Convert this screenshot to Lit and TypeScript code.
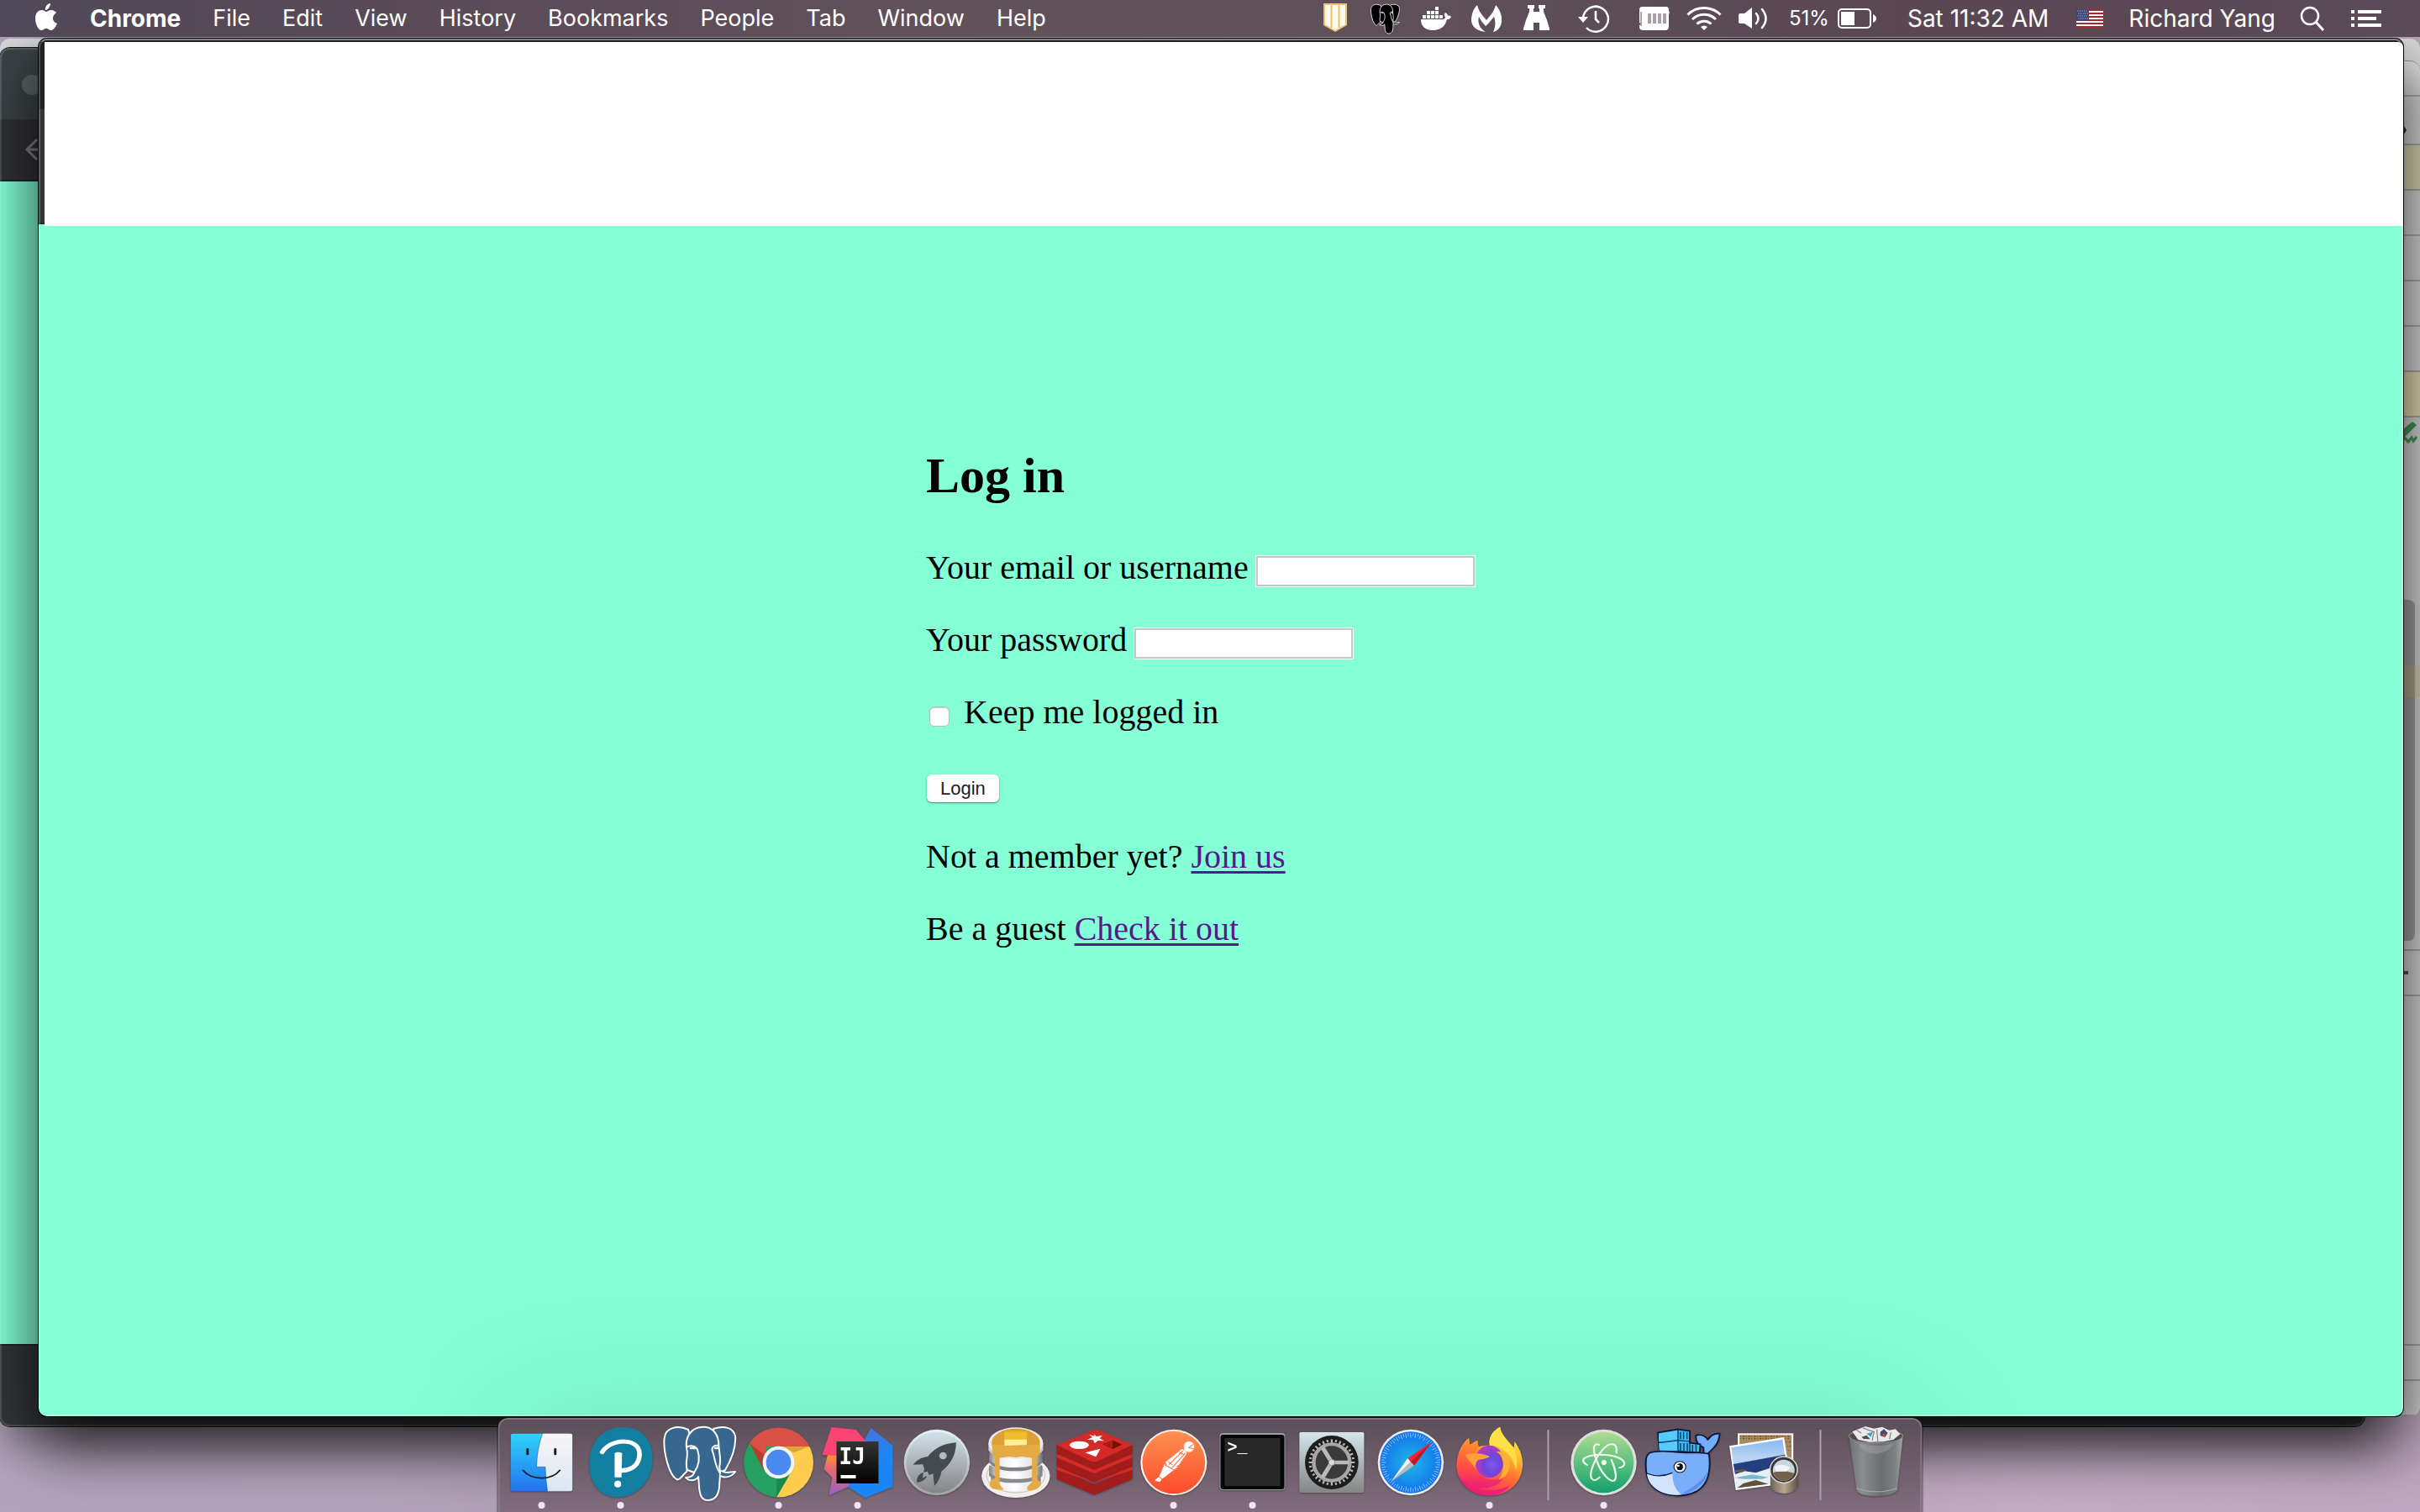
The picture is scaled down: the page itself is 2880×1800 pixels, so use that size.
import { LitElement, html, svg, css, type TemplateResult } from "lit";
import { customElement } from "lit/decorators.js";

/* ---------- shared drawings ---------- */

const elephant = (fill: string, line: string, w: number) => svg`
  <g fill=${fill} stroke=${line} stroke-width=${w} stroke-linejoin="round" stroke-linecap="round">
    <path d="M60 5C72 1 84 3 86 14C87 28 81 42 74 54L66 58L58 20Z"/>
    <path d="M30 6C18 0 3 3 1.500 16C0 32 7 60 16 65C20 67 22 61 28 56L34 20Z"/>
    <path d="M29 54C25 46 31 38 28 28C26 14 34 4 45 3C56 1 64 8 66 20C66 34 70 40 67 50C69 58 67 66 67 74C66 84 62 90 53 90C46 90 44 84 43 76L42 62C38 68 30 67 27 63C32 63 36 61 37 57Z"/>
    <path d="M69 55C75 59 80 56 86 56C82 62 74 64 68 61" />
    <path d="M28 27C32 24 39 25 41 30C45 42 42 50 37 57" fill="none"/>
    <path d="M66 25C60 24 57 28 59 32C62 40 61 48 68 58" fill="none"/>
    <path d="M33 28h5M62 28h4" stroke-width=${w * 1.3}/>
  </g>`;

const ticks = (n: number, cx: number, cy: number, r1: number, r2: number, ratio: number) => {
  let d = "";
  for (let i = 0; i < n; i++) {
    const a = (i / n) * Math.PI * 2;
    const inner = i % 2 ? r1 + (r2 - r1) * 0.35 : r1;
    d += `M${cx + Math.cos(a) * inner} ${cy + Math.sin(a) * inner * ratio}L${cx + Math.cos(a) * r2} ${cy + Math.sin(a) * r2 * ratio}`;
  }
  return d;
};

/* ---------- menu bar glyphs ---------- */

interface Glyph { label: string; cell: number; w: number; art: TemplateResult }

const glyphs: Glyph[] = [
  { label: "Shield", cell: 60, w: 28, art: svg`
    <path d="M0 4H28V30L14 38L0 30Z" fill="#efc172"/>
    <path d="M2 6H26V29L14 36L2 29Z" fill="#fffaf0"/>
    <path d="M9.500 6V33M18.500 6V33" stroke="#efbd68" stroke-width="2"/>` },
  { label: "PostgreSQL", cell: 60, w: 36, art: svg`<g transform="translate(0 4) scale(.4)">${elephant("#000", "#f1edf0", 2.2)}</g>` },
  { label: "Docker", cell: 60, w: 36, art: svg`
    <path d="M0 23H26C28 23 29 22 29 20C27 18 28 16 29 15C31 16 32 17 32 19C34 18 35 19 36 20C35 23 32 23 31 23C29 31 24 36 14 36C5 36 0 31 0 23Z" fill="#fff"/>
    <g fill="#fff"><path d="M2 18h4v4h-4zM7 18h4v4h-4zM12 18h4v4h-4zM17 18h4v4h-4zM22 18h4v4h-4zM7 13h4v4h-4zM12 13h4v4h-4zM17 13h4v4h-4zM17 8h4v4h-4z"/></g>` },
  { label: "Malware scanner", cell: 60, w: 36, art: svg`
    <path d="M7 6C9 14 13 18 18 24C23 18 27 14 29 6C34 11 37 19 36 26C35 33 31 37 26 38C29 32 29 25 27 20C24 23 21 28 17 31C14 28 11 24 9 20C7 27 10 34 17 38C8 37 1 33 0 25C0 18 2 11 7 6Z" fill="#fff"/>` },
  { label: "Binoculars", cell: 60, w: 32, art: svg`
    <path d="M5 6h8v4h-1v4h7v-4h-1V6h8v4h-2v4l4 10l3 10v2H19V27h-7v9H0v-2l3-10l4-10v-4H5z" fill="#fff"/>` },
  { label: "Time Machine", cell: 76, w: 38, art: svg`
    <path d="M6 21A15 15 0 1 1 10 33" fill="none" stroke="#fff" stroke-width="2.500"/>
    <path d="M0 20H12L6 27Z" fill="#fff"/><path d="M21 13V23L25 27" fill="none" stroke="#fff" stroke-width="2.500"/>` },
  { label: "Memory", cell: 68, w: 36, art: svg`
    <path d="M4 8H32C35 8 35 11 35 13C36 14 36 16 35 17V31C35 35 33 36 31 36H5C2 36 0 35 0 32V30C2 29 2 28 0 27V12C0 9 1 8 4 8Z" fill="#fff"/>
    <path d="M2 14V31" stroke="#5d4d57" stroke-width="1"/>
    <path d="M12 16V28M18 16V28M24 16V28M30 16V28" stroke="#a99fa6" stroke-width="4"/>` },
  { label: "Wi-Fi", cell: 50, w: 42, art: svg`
    <g fill="none" stroke="#fff" stroke-width="3"><path d="M1.500 17.500A28 28 0 0 1 40.500 17.500"/><path d="M7 23A20 20 0 0 1 35 23"/><path d="M12.500 28.500A12.500 12.500 0 0 1 29.500 28.500"/></g>
    <path d="M17 32A6 6 0 0 1 25 32L21 36Z" fill="#fff"/>` },
  { label: "Volume", cell: 66, w: 34, art: svg`
    <path d="M0 18Q0 16 2 16H7L16 9V34L7 28H2Q0 28 0 26Z" fill="#fff"/>
    <g fill="none" stroke="#fff" stroke-width="2.500" stroke-linecap="round"><path d="M21 16Q26 22 21 28"/><path d="M28 11Q37 22 28 33"/></g>` },
];

const battery: Glyph = { label: "Battery", cell: 56, w: 46, art: svg`
  <rect x="1" y="11" width="38" height="22" rx="4" fill="none" stroke="#fff" stroke-width="2"/>
  <rect x="4" y="14" width="16" height="16" fill="#fff"/><path d="M42 17Q46 19 46 22Q46 25 42 27Z" fill="#fff"/>` };
const flag: Glyph = { label: "Input source: U.S.", cell: 64, w: 32, art: svg`
  <rect y="11" width="32" height="22" fill="#fff"/>
  <path d="M0 12H32M0 16H32M0 20H32M0 24H32M0 28H32M0 32H32" stroke="#ad2730" stroke-width="2"/>
  <rect y="11" width="15" height="14" fill="#3f4577"/>
  <path d="M1.500 13H14M2.500 16H14M1.500 19H14M2.500 22H14" stroke="#c9cbe0" stroke-width="1" stroke-dasharray="1 1.500"/>` };
const search: Glyph = { label: "Spotlight", cell: 60, w: 30, art: svg`
  <circle cx="12" cy="19" r="10" fill="none" stroke="#fff" stroke-width="2.500"/><path d="M19 26L28 36" stroke="#fff" stroke-width="3"/>` };
const list: Glyph = { label: "Notification Center", cell: 68, w: 36, art: svg`
  <path d="M0 12h4v4h-4zM0 20h4v4h-4zM0 28h4v4h-4zM8 12h28v4h-28zM8 20h22v4h-22zM8 28h28v4h-28z" fill="#fff"/>` };

/* ---------- dock icons; vb is the view box of each drawing ---------- */

interface App { name: string; vb: string; running?: boolean; art: TemplateResult }
const box = (x: number) => `${x} 66 254 282`;

const apps: App[] = [
  { name: "Finder", vb: box(22), running: true, art: svg`
    <defs><linearGradient id="fb" x2="0" y2="1"><stop stop-color="#2fd3fb"/><stop offset="1" stop-color="#2273ee"/></linearGradient>
    <linearGradient id="fw" x2="0" y2="1"><stop stop-color="#f7f6f6"/><stop offset="1" stop-color="#dbe6f3"/></linearGradient></defs>
    <rect x="50" y="110" width="198" height="206" rx="6" fill="url(#fb)"/>
    <path d="M152 110H242Q248 110 248 116V310Q248 316 242 316H168Q162 270 161 229H133Q134 165 152 110Z" fill="url(#fw)"/>
    <path d="M152 110Q134 165 133 229H161Q162 270 168 316" fill="none" stroke="#1c4f86" stroke-width="1.500"/>
    <path d="M104 166V183M193 166V183" stroke="#141a22" stroke-width="8" stroke-linecap="round"/>
    <path d="M89 241Q110 269 150 269Q188 269 208 241" fill="none" stroke="#141a22" stroke-width="5" stroke-linecap="round"/>` },
  { name: "Pearson", vb: box(276), running: true, art: svg`
    <path d="M408 87C470 87 507 130 506 205C504 280 455 337 392 337C335 337 302 285 302 215C304 135 350 87 408 87Z" fill="#127fa1"/>
    <path d="M344 176C362 145 400 134 428 140C455 146 468 166 463 195C458 228 430 246 396 241" fill="none" stroke="#fff" stroke-width="15" stroke-linecap="round"/>
    <path d="M384 180Q396 172 408 180L406 266H384Z" fill="#fff"/><ellipse cx="394" cy="290" rx="11" ry="12" fill="#fff"/>` },
  { name: "pgAdmin", vb: "-3.600 -4 94 94", art: svg`${elephant("#37678f", "#fff", 2)}` },
  { name: "Chrome", vb: box(784), running: true, art: svg`
    <defs><clipPath id="cc"><ellipse cx="911" cy="213" rx="112" ry="124"/></clipPath></defs>
    <g clip-path="url(#cc)"><rect x="798" y="88" width="226" height="252" fill="#25a060"/>
    <path d="M911 156H1030V345H900L952 245Z" fill="#fecd4f"/>
    <path d="M790 160L818 145L865 240L870 156H1030V80H790Z" fill="#da5046"/>
    <path d="M818 145L866 245L870 190Z" fill="#b73c32"/><path d="M925 156H1010L960 178Z" fill="#dba638"/>
    <path d="M905 337L946 258L905 268Z" fill="#198a4d"/></g>
    <ellipse cx="911" cy="213" rx="51" ry="58" fill="#f3f4f3"/><ellipse cx="911" cy="213" rx="40" ry="46" fill="#4a8af0"/>` },
  { name: "IntelliJ IDEA", vb: "0 0 94 94", running: true, art: svg`
    <defs><linearGradient id="jb" x1="0" y1="0" x2=".6" y2="1"><stop stop-color="#5f6bd0"/><stop offset=".7" stop-color="#1a86f6"/></linearGradient>
    <linearGradient id="jk" x2="0" y2="1"><stop stop-color="#343434"/><stop offset="1"/></linearGradient>
    <linearGradient id="jp" x2="0" y2="1"><stop stop-color="#ff9a2c"/><stop offset=".35" stop-color="#e8696c"/><stop offset="1" stop-color="#9563c4"/></linearGradient></defs>
    <path d="M12 38L7 57L17 67L13 88L50 72V40Z" fill="url(#jp)"/>
    <path d="M63 8L89 29V78L56 91L36 78L54 24Z" fill="url(#jb)"/>
    <path d="M16 7L45 10L58 25L40 42L5 40Z" fill="#fc4473"/>
    <rect x="22" y="24" width="50" height="50" fill="url(#jk)"/>
    <text x="25" y="51" font-family="'DejaVu Sans Mono', monospace" font-weight="700" font-size="26" fill="#fff">IJ</text>
    <rect x="27" y="64" width="18" height="4" fill="#fff"/>` },
  { name: "Launchpad", vb: box(1292), art: svg`
    <defs><linearGradient id="lp" x2="0" y2="1"><stop stop-color="#d2e2ea"/><stop offset="1" stop-color="#858585"/></linearGradient>
    <linearGradient id="lr" x2="0" y2="1"><stop stop-color="#e5f4fa"/><stop offset="1" stop-color="#a2a2a2"/></linearGradient></defs>
    <ellipse cx="1420" cy="213" rx="106" ry="118" fill="url(#lr)"/><ellipse cx="1420" cy="213" rx="98" ry="109" fill="url(#lp)"/>
    <path d="M1482 142C1440 145 1410 165 1391 192C1370 195 1355 205 1344 221L1375 220L1380 236L1377 248L1390 245L1395 258L1408 253L1412 297C1425 282 1432 265 1435 245C1465 220 1482 185 1482 142Z" fill="#454a4e"/>
    <ellipse cx="1440" cy="189" rx="12" ry="13" fill="#b5bcc0"/>
    <path d="M1377 249C1360 255 1355 268 1356 284C1372 282 1385 275 1388 260L1374 269Z" fill="#454a4e"/>` },
  { name: "Sequel Pro", vb: box(32), art: svg`
    <defs><linearGradient id="sp"><stop stop-color="#8c8c8c"/><stop offset=".2" stop-color="#f1f1f1"/><stop offset=".5" stop-color="#fff"/><stop offset=".8" stop-color="#e4e4e4"/><stop offset="1" stop-color="#777"/></linearGradient></defs>
    <ellipse cx="160" cy="262" rx="110" ry="77" fill="#f1f0ef"/><ellipse cx="160" cy="259" rx="94" ry="62" fill="none" stroke="#b9aa98" stroke-width="2"/>
    <path d="M80 250H240V285Q225 315 160 315T80 285Z" fill="url(#sp)"/>
    <path d="M74 225Q160 285 246 225V260Q225 285 160 286T74 260Z" fill="#888b8d"/><path d="M76 222Q160 275 244 222V248Q225 272 160 272T76 248Z" fill="url(#sp)"/>
    <path d="M74 180Q160 240 246 180V212Q225 243 160 244T74 212Z" fill="#808385"/><path d="M76 175Q160 225 244 175V203Q225 230 160 231T76 203Z" fill="url(#sp)"/>
    <path d="M72 144V170Q90 198 160 198T248 170V144Z" fill="#c8c8c8"/><ellipse cx="160" cy="144" rx="88" ry="56" fill="#eceae8"/>
    <ellipse cx="160" cy="143" rx="78" ry="51" fill="#dca035"/>
    <path d="M84 150V180Q88 190 93 194V270Q72 278 76 296Q84 314 122 310L108 292V197Q160 186 212 197V284Q192 300 198 312Q225 318 240 295Q245 282 229 276V194L238 180V150Z" fill="#e4ab45"/>
    <path d="M122 107Q124 103 130 103H192Q197 105 196 115L195 150L124 153Z" fill="#eebd2d"/><path d="M124 131H196L195 150L124 153Z" fill="#fff0a0"/>` },
  { name: "Redis", vb: box(286), art: svg`
    <path d="M292 236V272L412 329L535 272V236L412 290Z" fill="#a11d1c"/><path d="M292 232L412 180L535 232V240L412 284L292 240Z" fill="#d52b28"/>
    <path d="M292 196V228L412 284L535 228V196L412 250Z" fill="#a11d1c"/><path d="M292 188L412 140L535 188V196L412 252L292 196Z" fill="#d52b28"/>
    <path d="M292 150V182L412 240L535 182V150L412 206Z" fill="#a11d1c"/><path d="M292 150L405 100Q418 93 432 100L535 150L425 208Q412 214 400 208Z" fill="#d52b28"/>
    <ellipse cx="364" cy="151" rx="31" ry="14" fill="#fff"/><path d="M383 178L432 164L418 193Z" fill="#fff"/>
    <path d="M411 110L419 120L438 117L430 127L444 136L424 135L414 145L409 133L389 131L406 124L397 114L414 119Z" fill="#fff"/>
    <path d="M440 148L472 134L502 149L472 165Z" fill="#7a0c00"/><path d="M440 148L472 134V164Z" fill="#a82016"/>` },
  { name: "Postman", vb: box(540), running: true, art: svg`
    <defs><linearGradient id="pm" x2="0" y2="1"><stop stop-color="#fd9150"/><stop offset="1" stop-color="#fd4b2d"/></linearGradient></defs>
    <ellipse cx="668" cy="213" rx="107" ry="118" fill="#f7f2ee"/><ellipse cx="668" cy="213" rx="101" ry="112" fill="url(#pm)"/>
    <ellipse cx="717" cy="157" rx="17" ry="19" fill="#fff"/><path d="M731 148L716 160L734 165" fill="none" stroke="#fd7a47" stroke-width="3"/>
    <path d="M693 166Q707 168 710 181L684 222L655 240L641 212Z" fill="#fff"/><path d="M638 220L662 228L682 228L630 272L623 282L606 278L622 262Z" fill="#fff"/>
    <path d="M697 172L652 221M705 180L662 232M684 175L703 186M650 209L664 222M640 222L672 242M620 263L632 274" stroke="#fd6d3f" stroke-width="3"/>` },
  { name: "Terminal", vb: "0 0 94 94", running: true, art: svg`
    <rect x="8" y="14" width="78" height="68" rx="4" fill="#99a1a8"/><rect x="9" y="16" width="76" height="65" rx="3" fill="#060606"/><rect x="14" y="20" width="66" height="57" fill="#282828"/>
    <text x="17" y="37" font-family="'Liberation Mono', monospace" font-weight="700" font-size="20" fill="#fff">&gt;_</text>` },
  { name: "System Preferences", vb: box(1048), art: svg`
    <defs><linearGradient id="pr" x2="0" y2="1"><stop stop-color="#d4e6ee"/><stop offset="1" stop-color="#858585"/></linearGradient></defs>
    <rect x="1072" y="105" width="208" height="216" rx="5" fill="url(#pr)"/>
    <ellipse cx="1176" cy="213" rx="86" ry="96" fill="#1d1d1d"/><path d=${ticks(32, 1176, 213, 62, 74, 1.11)} stroke="#b6b6b6" stroke-width="6"/>
    <ellipse cx="1176" cy="213" rx="58" ry="65" fill="#3a3a3a" stroke="#a7a7a7" stroke-width="12"/>
    <path d="M1176 213H1232M1176 213L1147 160M1176 213L1147 266" stroke="#b9b9b9" stroke-width="14"/>
    <ellipse cx="1176" cy="213" rx="10" ry="11" fill="#ddd" stroke="#777" stroke-width="2"/>` },
  { name: "Safari", vb: box(1302), art: svg`
    <defs><radialGradient id="sf"><stop stop-color="#21b9e2"/><stop offset="1" stop-color="#1273f0"/></radialGradient></defs>
    <ellipse cx="1430" cy="213" rx="106" ry="118" fill="#eeeeef"/><ellipse cx="1430" cy="213" rx="99" ry="110" fill="url(#sf)"/>
    <path d=${ticks(72, 1430, 213, 80, 95, 1.11)} stroke="#c5e6fb" stroke-width="2"/>
    <path d="M1497 140L1420 198L1441 224Z" fill="#ef2734"/><path d="M1497 140L1430 211L1441 224Z" fill="#c51626"/>
    <path d="M1366 283L1420 198L1430 211Z" fill="#f6f4f2"/><path d="M1366 283L1430 211L1441 224Z" fill="#b9b9bb"/>` },
  { name: "Firefox", vb: box(16), running: true, art: svg`
    <defs><linearGradient id="ff" x1=".8" y1="0" x2=".3" y2="1"><stop stop-color="#fff24b"/><stop offset=".3" stop-color="#ffc02f"/><stop offset=".6" stop-color="#ff6b35"/><stop offset="1" stop-color="#f0256c"/></linearGradient>
    <radialGradient id="fp" cx=".6" cy=".6"><stop stop-color="#7a58f0"/><stop offset=".6" stop-color="#7045d6"/><stop offset="1" stop-color="#a73cc8"/></radialGradient>
    <linearGradient id="fo" x2="0" y2="1"><stop stop-color="#ff9a2a"/><stop offset=".6" stop-color="#ff4a44"/><stop offset="1" stop-color="#ec1f7a"/></linearGradient></defs>
    <path d="M144 152C138 120 158 98 177 86C180 112 200 132 222 160L224 138C240 162 251 190 250 225C246 290 200 331 144 331C85 331 38 285 38 225C38 180 55 145 77 126L80 150L104 134L108 156C120 154 130 152 144 152Z" fill="url(#ff)"/>
    <path d="M38 225C38 180 55 145 77 126L80 150L104 134L108 156C92 180 88 215 100 240C120 275 160 285 190 262C178 305 110 320 60 288C45 270 38 248 38 225Z" fill="url(#fo)"/>
    <path d="M42 256C70 310 150 330 210 295C190 322 165 331 144 331C95 331 55 305 42 256Z" fill="#ef1f73"/>
    <ellipse cx="143" cy="210" rx="46" ry="58" fill="url(#fp)"/>
    <path d="M66 186C90 176 115 180 144 191C138 200 118 200 108 204C98 210 100 222 96 236C92 218 75 208 66 186Z" fill="#ffa03a"/>
    <path d="M165 174C190 172 210 190 209 220C206 255 190 270 172 276C190 250 192 215 180 190C175 182 170 178 165 174Z" fill="#ffae35"/>
    <path d="M144 152C138 120 158 98 177 86C180 112 205 140 222 165C232 190 235 215 228 240C222 190 190 165 160 153Z" fill="#ffe147"/>` },
];

const tools: App[] = [
  { name: "Atom", vb: box(384), running: true, art: svg`
    <defs><linearGradient id="at" x2="0" y2="1"><stop stop-color="#b0dc91"/><stop offset=".5" stop-color="#5fc07f"/><stop offset="1" stop-color="#12a06d"/></linearGradient></defs>
    <ellipse cx="511" cy="213" rx="106" ry="118" fill="#dedede"/><ellipse cx="511" cy="213" rx="97" ry="109" fill="url(#at)"/>
    <ellipse cx="512" cy="213" rx="8" ry="9" fill="#f5f9f3"/>
    <g fill="none" stroke="#f1f8ee" stroke-width="6" stroke-linecap="round"><path d="M552 178C556 140 530 140 510 165C485 195 462 250 472 270C480 282 490 274 498 266"/>
    <path d="M496 150C478 140 474 165 488 205C502 250 530 284 545 278C555 268 548 235 536 204"/><path d="M458 222C430 205 450 188 495 185C550 184 590 205 574 226Q570 231 562 232"/></g>` },
  { name: "Docker", vb: box(638), art: svg`
    <g stroke="#0b1638" stroke-width="5" stroke-linejoin="round"><path d="M846 182C860 165 882 150 884 110C868 108 855 116 846 132C838 118 825 112 808 116C806 140 815 150 832 160L833 182Z" fill="#74adfb"/>
    <path d="M686 106L750 95L788 101V143L822 148L820 178L690 170L688 144Z" fill="#38b9f0"/>
    <path d="M660 178C700 165 740 180 790 178C815 180 835 175 850 184C856 240 850 290 810 316C770 340 715 335 680 310C650 285 645 250 647 210Q646 188 660 178Z" fill="#79affa"/></g>
    <path d="M688 110L748 99V133L688 139Z" fill="#55cbfb"/><path d="M688 144L748 137V172L690 170Z" fill="#55cbfb"/>
    <path d="M750 95V176M686 143L750 134L788 138M788 140V178M758 104V130M768 104V130M779 105V130M758 144V172M769 144V172M780 145V172M797 150V174M808 151V174" fill="none" stroke="#0b2a58" stroke-width="3.500"/>
    <path d="M847 240C840 290 800 320 760 328C800 300 835 275 847 240Z" fill="#5a8ee8"/>
    <path d="M650 252Q690 268 732 250Q730 300 760 328C700 335 653 300 650 252Z" fill="#d3e2fd"/>
    <path d="M650 252Q690 270 732 250" fill="none" stroke="#0b1638" stroke-width="4"/>
    <ellipse cx="756" cy="229" rx="19" ry="20" fill="#fff" stroke="#0b1638" stroke-width="3"/><ellipse cx="756" cy="229" rx="10" ry="12" fill="#070b18"/><ellipse cx="751" cy="225" rx="4" ry="4" fill="#fff"/>` },
  { name: "Preview", vb: box(892), art: svg`
    <defs><linearGradient id="sky" x2="0" y2="1"><stop stop-color="#86b8f2"/><stop offset=".7" stop-color="#b9d3f2"/></linearGradient>
    <linearGradient id="lens"><stop stop-color="#6f6456"/><stop offset=".5" stop-color="#b7a98f"/><stop offset="1" stop-color="#5c5145"/></linearGradient></defs>
    <rect x="942" y="109" width="179" height="130" fill="#fbfaf7"/><rect x="948" y="115" width="167" height="110" fill="#a98a5c"/>
    <path d="M950 120H1112M950 128H1112M1098 140H1112M1100 155H1114M1104 170H1114" stroke="#6e5331" stroke-width="4" stroke-dasharray="3 5 6 4"/>
    <path d="M915 154L1091 123L1114 286L936 312Z" fill="#fff"/><path d="M922 160L1086 131L1094 190L928 224Z" fill="url(#sky)"/>
    <path d="M928 219L1094 185L1107 278L941 304Z" fill="#233f80"/><path d="M932 256L965 244L1000 250L1050 232L1100 240L1107 278L941 304Z" fill="#e6f0f7"/>
    <path d="M934 268L990 256L1040 266L1020 272L960 272Z" fill="#7eb7cc"/><path d="M933 240L970 238L960 247L934 250Z" fill="#6b5a4c"/><path d="M941 304L960 288L1000 276L1040 290Z" fill="#5f5036"/>
    <path d="M1047 240V300Q1058 323 1092 324Q1125 322 1136 300V240Z" fill="url(#lens)"/><ellipse cx="1090" cy="239" rx="44" ry="47" fill="#3a3834" stroke="#dddcd9" stroke-width="4"/>
    <ellipse cx="1090" cy="241" rx="35" ry="38" fill="#c6d7e2"/><path d="M1056 250Q1080 235 1124 252Q1115 278 1090 279Q1065 278 1056 250Z" fill="#77614a"/><path d="M1060 228Q1085 212 1112 232L1098 245L1066 246Z" fill="#eef4f8"/>` },
];

const trash: App = { name: "Trash", vb: box(1265), art: svg`
  <defs><linearGradient id="tr"><stop stop-color="#6d7071"/><stop offset=".25" stop-color="#8b8e8e"/><stop offset=".6" stop-color="#6b6d6e"/><stop offset=".85" stop-color="#7e8081"/><stop offset="1" stop-color="#a1a4a5"/></linearGradient></defs>
  <path d="M1305 118Q1392 155 1479 118L1460 312Q1445 333 1392 333T1330 312Z" fill="url(#tr)"/>
  <path d="M1305 118Q1310 100 1392 100T1479 118Q1470 143 1392 143T1305 118Z" fill="#4b4d4e" stroke="#8d9091" stroke-width="3"/>
  <path d="M1316 103L1358 84L1386 92L1412 86L1435 98L1455 94L1470 112L1448 132L1415 139L1370 140L1335 132Z" fill="#e9e9e7"/>
  <path d="M1362 110L1382 104L1376 122Z" fill="#35a7c4"/><path d="M1346 122L1362 116L1374 130L1352 129Z" fill="#5a4c4a"/><path d="M1406 104L1418 94L1430 108L1422 122L1406 118Z" fill="#3a4d74"/><path d="M1410 112L1425 110L1420 124Z" fill="#c2452b"/>
  <path d="M1395 95L1398 138M1330 98L1345 108M1440 105L1436 130M1350 90L1386 104L1380 134" stroke="#77797a" stroke-width="3" fill="none"/>
  <path d="M1336 146Q1392 160 1450 146Q1430 178 1392 182Q1350 180 1336 146Z" fill="#a5a8a8" opacity=".45"/>
  <path d="M1330 305Q1392 330 1461 305" fill="none" stroke="#a3a6a7" stroke-width="3"/>` };

/* ---------- elements ---------- */

@customElement("menu-bar")
class MenuBar extends LitElement {
  static styles = css`
    :host { display: flex; justify-content: space-between; height: 44px; color: #fff; font: 27px/44px Inter, sans-serif;
      background: linear-gradient(90deg, #504959, #5b4a58 18%, #62525a 42%, #5e4f59 60%, #594752 80%, #5b4a58); }
    nav, .status { display: flex; align-items: center; }
    nav { padding-left: 41px; gap: 38px; }
    button { display: flex; align-items: center; justify-content: center; height: 44px; padding: 0; border: 0; background: none; color: inherit; font: inherit; white-space: nowrap; }
    .app { font-weight: 700; font-size: 28px; }
    .status { padding-right: 30px; font-size: 28px; }
    .percent { padding-left: 10px; padding-right: 5px; font-size: 24px; }
    .clock { padding: 0 17px 0 32px; }
    .user { padding: 0 14px; }
    svg { display: block; }
  `;
  private glyph(g: Glyph) {
    return html`<button aria-label=${g.label} style="width:${g.cell}px"><svg width=${g.w} height="44" viewBox="0 0 ${g.w} 44">${g.art}</svg></button>`;
  }
  render() {
    return html`
      <nav aria-label="Menu bar">
        <button aria-label="Apple"><svg width="28" height="44" viewBox="0 0 28 44"><path fill="#fff" d="M19 4C19 8 16 12 13 12C12 8 16 4 19 4ZM14 14C15 14 17 12 20 12C23 12 25 14 26 15C20 19 21 26 27 28C25 33 22 36 20 36C17 36 17 34 14 34C11 34 11 36 8 36C5 36 1 29 1 22C1 15 5 12 9 12C11 12 13 14 14 14Z"/></svg></button>
        <button class="app">Chrome</button>
        ${["File", "Edit", "View", "History", "Bookmarks", "People", "Tab", "Window", "Help"].map((m) => html`<button>${m}</button>`)}
      </nav>
      <div class="status">
        ${glyphs.map((g) => this.glyph(g))}
        <span class="percent">51%</span>${this.glyph(battery)}
        <button class="clock">Sat 11:32 AM</button>${this.glyph(flag)}
        <button class="user">Richard Yang</button>${this.glyph(search)}${this.glyph(list)}
      </div>`;
  }
}

@customElement("login-form")
class LoginForm extends LitElement {
  static styles = css`
    :host { display: block; width: 702px; max-width: 100%; color: #000; font: 40px/46px "Liberation Serif", serif; }
    h2 { margin: 0 0 52px; font-size: 60px; line-height: 70px; }
    p { margin: 0 0 40px; height: 46px; white-space: nowrap; }
    .text { width: 262px; height: 38px; box-sizing: border-box; margin: 0 0 0 -2px; padding: 2px; border: 1px solid #eefdf7; outline: 2px solid #c4c9c7; outline-offset: -3px; background: #fff; font: 22px "Liberation Sans", sans-serif; vertical-align: 2px; }
    .check { appearance: none; width: 24px; height: 24px; margin: 0 7px 0 4px; border: 1px solid #b4beb9; border-radius: 6px; background: #fff; box-shadow: inset 0 1px 1px #ccc; vertical-align: -4px; }
    .row { display: flex; align-items: center; }
    .submit { height: 33px; margin: 8px 0 0 1px; padding: 0 16px; border: 0; border-radius: 6px; background: #fff; color: #222; font: 22px/33px "Liberation Sans", sans-serif; box-shadow: 0 1px 2px rgba(0, 60, 40, .6); }
    a { color: #551a8b; text-decoration-thickness: 3px; text-underline-offset: 4px; text-decoration-skip-ink: none; }
  `;
  render() {
    return html`
      <form @submit=${(e: Event) => e.preventDefault()}>
        <h2>Log in</h2>
        <p><label for="user">Your email or username</label> <input class="text" id="user" type="text"></p>
        <p><label for="pass">Your password</label> <input class="text" id="pass" type="password"></p>
        <p><input class="check" id="keep" type="checkbox"> <label for="keep">Keep me logged in</label></p>
        <p class="row"><button class="submit">Login</button></p>
        <p>Not a member yet? <a href="#join">Join us</a></p>
        <p>Be a guest <a href="#guest">Check it out</a></p>
      </form>`;
  }
}

@customElement("app-dock")
class AppDock extends LitElement {
  static styles = css`
    :host { display: flex; box-sizing: border-box; height: 112px; padding: 2px 6px 0 3px; border: 2px solid #7d7279; border-bottom: 0; border-radius: 12px 12px 0 0;
      background: linear-gradient(#5c4f59, #806c7d); box-shadow: 0 0 0 1px rgba(20, 16, 20, .6), 0 0 160px rgba(0, 0, 0, .13); }
    button { width: 94px; padding: 0; border: 0; background: none; display: flex; flex-direction: column; align-items: center; gap: 2px; }
    svg { display: block; width: 94px; height: 94px; overflow: visible; filter: drop-shadow(0 1px 1px rgba(0, 0, 0, .3)); }
    .dot { width: 8px; height: 8px; border-radius: 50%; background: #f3e3f4; }
    .rule { width: 2px; height: 84px; margin: 10px 18px 0 22px; background: #ac9fab; }
  `;
  private item(a: App) {
    return html`<button aria-label=${a.name}><svg viewBox=${a.vb} preserveAspectRatio="none">${a.art}</svg>${a.running ? html`<span class="dot"></span>` : ""}</button>`;
  }
  render() {
    return html`${apps.map((a) => this.item(a))}<span class="rule"></span>${tools.map((a) => this.item(a))}<span class="rule"></span>${this.item(trash)}`;
  }
}

@customElement("app-root")
class AppRoot extends LitElement {
  static styles = css`
    :host { display: flex; flex-direction: column; height: 100vh; overflow: hidden; }
    .desktop { position: relative; flex: 1; overflow: hidden; background: linear-gradient(90deg, #b3a5bb, #b9a6bb 40%, #c6b0c6 75%, #bfa9c0); }
    .window { position: absolute; box-sizing: border-box; overflow: hidden; }

    .editor { inset: 2px 0 114px 0; border-radius: 12px; background: #dcdcdc; }
    .panel { position: absolute; inset: 26px 0 0 auto; width: 40px; display: flex; flex-direction: column; border-top: 1px solid #999; border-radius: 0 12px 0 0; background: linear-gradient(#e6e6e6, #d9d9d9 42px); }
    .panel div { flex: none; box-sizing: border-box; border-bottom: 2px solid #adadad; }
    .h42 { height: 42px; } .h54 { height: 54px; } .h58 { height: 58px; }
    .warn { background: #dcdab4; } .note { background: #e8dfb0; }
    .panel .track { position: relative; flex: 1; padding-top: 5px; }
    .panel .blank { height: 416px; }
    .panel svg { display: block; }
    .track svg { margin: 0 3px 0 auto; }
    .thumb { position: absolute; top: 217px; right: 6px; width: 28px; height: 406px; border-radius: 8px; background: #a3a3a3; }
    .mark { position: absolute; top: 295px; right: 0; width: 40px; height: 38px; background: rgba(215, 190, 80, .25); }
    .tool svg { margin: 20px 15px 0 auto; }
    .bar svg { margin: 24px 14px 0 auto; }

    .browser { inset: 13px 66px 102px 0; display: flex; flex-direction: column; border-radius: 12px; background: #84ffd6; box-shadow: 0 0 0 1px #161616, 0 20px 40px rgba(0, 0, 0, .25); }
    .browser::after { content: ""; position: absolute; inset: 0; border: 2px solid rgba(255, 255, 255, .14); border-radius: 12px; }
    .tabs { height: 85px; padding: 32px 0 0 26px; box-sizing: border-box; background: #3c4346; }
    .light { display: block; width: 24px; height: 24px; border-radius: 50%; background: #5c6365; }
    .toolbar { height: 74px; padding: 23px 0 0 30px; box-sizing: border-box; background: #303135; border-bottom: 2px solid #222; }
    .toolbar svg { display: block; }
    .shelf { height: 98px; margin-top: auto; background: #333539; border-top: 2px solid #222; box-sizing: border-box; }

    .front { inset: 2px 20px 114px 46px; display: flex; flex-direction: column; border-radius: 10px; background: #84ffd6; box-shadow: 0 0 0 1px #000, 0 34px 70px 4px rgba(0, 0, 0, .72); }
    .front::after { content: ""; position: absolute; inset: 0; border: 2px solid rgba(255, 255, 255, .2); border-top-color: rgba(255, 255, 255, .45); border-radius: 10px; pointer-events: none; }
    .head { display: flex; height: 223px; padding: 4px 0 0 7px; box-sizing: border-box; background: linear-gradient(#202124 84px, #35363a 84px 219px, #222 219px 221px, #84ffd6 221px); }
    .head .sheet { flex: 1; background: #fff; border-radius: 0 6px 0 0; }
    .page { flex: 1; display: flex; justify-content: center; padding-top: 262px; }
    .dock { position: absolute; bottom: 0; left: 50%; transform: translateX(-50%); }
  `;
  render() {
    return html`
      <menu-bar></menu-bar>
      <main class="desktop">
        <section class="window editor" aria-label="Editor">
          <div class="panel">
            <div class="h42"></div>
            <div class="h58 tool"><svg width="10" height="44" viewBox="0 0 10 44"><path d="M0 12H4L9 20L4 28H0Z" fill="#333"/></svg></div>
            <div class="h54 warn"></div><div class="h54"></div><div class="h54"></div><div class="h54"></div><div class="h54"></div>
            <div class="h54 note"></div>
            <div class="track">
              <svg width="18" height="26" viewBox="0 0 18 26"><path d="M0 6L2 8L12 0L17 4L3 18L0 15Z" fill="#459a55"/><path d="M0 23L3 19L7 24L11 19L13 23L17 18" fill="none" stroke="#459a55" stroke-width="3"/></svg>
              <span class="thumb"></span><span class="mark"></span>
            </div>
            <div class="h54 bar"><svg width="10" height="4" viewBox="0 0 10 4"><rect width="10" height="4" fill="#555"/></svg></div>
            <div class="blank"></div>
            <div class="h42"></div>
            <div class="h42"></div>
          </div>
        </section>
        <section class="window browser" aria-label="Browser">
          <div class="tabs"><span class="light"></span></div>
          <div class="toolbar"><svg width="26" height="26" viewBox="0 0 26 26"><path d="M14 1L2 13L14 25M2 13H26" fill="none" stroke="#808184" stroke-width="3"/></svg></div>
          <div class="shelf"></div>
        </section>
        <section class="window front" aria-label="Chrome">
          <div class="head"><div class="sheet"></div></div>
          <div class="page"><login-form></login-form></div>
        </section>
        <app-dock class="dock"></app-dock>
      </main>`;
  }
}
